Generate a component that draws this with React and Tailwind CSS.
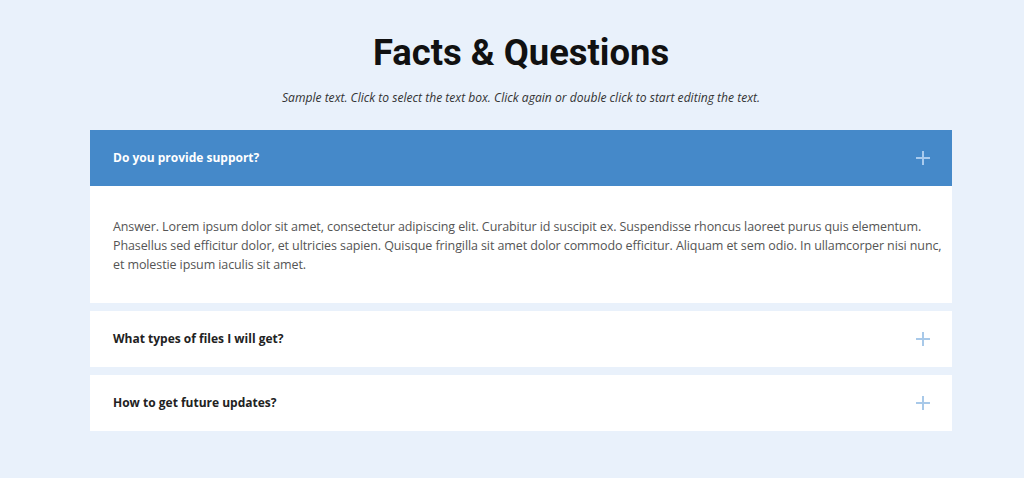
import React, { useState } from "react";

const items = [
  {
    q: "Do you provide support?",
    a: "Answer. Lorem ipsum dolor sit amet, consectetur adipiscing elit. Curabitur id suscipit ex. Suspendisse rhoncus laoreet purus quis elementum. Phasellus sed efficitur dolor, et ultricies sapien. Quisque fringilla sit amet dolor commodo efficitur. Aliquam et sem odio. In ullamcorper nisi nunc, et molestie ipsum iaculis sit amet.",
  },
  {
    q: "What types of files I will get?",
    a: "Answer. Lorem ipsum dolor sit amet, consectetur adipiscing elit.",
  },
  {
    q: "How to get future updates?",
    a: "Answer. Lorem ipsum dolor sit amet, consectetur adipiscing elit.",
  },
];

const Plus = ({ className }) => (
  <svg width="14" height="14" viewBox="0 0 14 14" className={className}>
    <path d="M7 0v14M0 7h14" stroke="currentColor" strokeWidth="2" />
  </svg>
);

const App = () => {
  const [open, setOpen] = useState(0);

  return (
    <div className="min-h-screen bg-[#e9f1fb] pt-[31px] font-['Open_Sans',sans-serif]">
      <div className="ml-[90px] w-[862px]">
        <h1 className="text-center font-['Roboto',sans-serif] text-[36.4px] font-bold leading-[44px] text-[#111111]">
          Facts &amp; Questions
        </h1>
        <p className="mt-[14px] text-center text-[12.1px] italic leading-[18px] text-[#333333]">
          Sample text. Click to select the text box. Click again or double click to start editing the text.
        </p>

        <div className="mt-[23px] flex flex-col gap-[8px]">
          {items.map((item, i) => {
            const isOpen = open === i;
            return (
              <div key={i} className="bg-white">
                <button
                  type="button"
                  onClick={() => setOpen(isOpen ? -1 : i)}
                  className={`flex h-[56px] w-full items-center justify-between pl-[23px] pr-[22px] text-left text-[12px] font-bold ${
                    isOpen ? "bg-[#4589c9] text-white" : "bg-white text-[#222222]"
                  }`}
                >
                  <span>{item.q}</span>
                  <Plus className={isOpen ? "text-[#a9cbee]" : "text-[#a8c9e9]"} />
                </button>
                {isOpen && (
                  <div className="pb-[29px] pl-[23px] pr-[8px] pt-[31px] text-[12.5px] leading-[19px] tracking-[-0.1px] text-[#555555]">
                    {item.a}
                  </div>
                )}
              </div>
            );
          })}
        </div>
      </div>
    </div>
  );
};

export default App;
